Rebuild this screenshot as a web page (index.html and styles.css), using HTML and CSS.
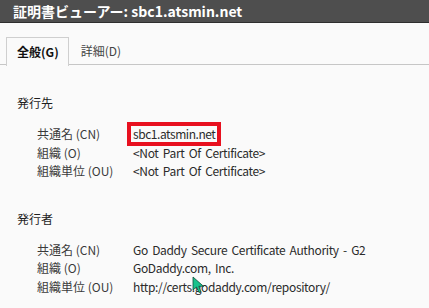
FILE: index.html
```html
<!DOCTYPE html>
<html lang="ja">
<head>
<meta charset="utf-8">
<link rel="stylesheet" href="styles.css">
</head>
<body>
<div class="titlebar">証明書ビューアー: sbc1.atsmin.net</div>
<div class="tabs">
  <div class="tab active">全般(G)</div>
  <div class="tab">詳細(D)</div>
</div>
<div class="content">
  <div class="section">
    <div class="heading">発行先</div>
    <div class="rows">
      <div class="label">共通名 (CN)</div><div class="value"><span class="hl">sbc1.atsmin.net</span></div>
      <div class="label">組織 (O)</div><div class="value">&lt;Not Part Of Certificate&gt;</div>
      <div class="label">組織単位 (OU)</div><div class="value">&lt;Not Part Of Certificate&gt;</div>
    </div>
  </div>
  <div class="section second">
    <div class="heading">発行者</div>
    <div class="rows">
      <div class="label">共通名 (CN)</div><div class="value">Go Daddy Secure Certificate Authority - G2</div>
      <div class="label">組織 (O)</div><div class="value">GoDaddy.com, Inc.</div>
      <div class="label">組織単位 (OU)</div><div class="value">http://certs.godaddy.com/repository/</div>
    </div>
  </div>
</div>
<svg class="cursor" width="14" height="18" viewBox="0 0 14 18"><path d="M1 1 L1 14 L4.5 11 L7 16.5 L9 15.5 L6.8 10.3 L11.5 10.3 Z" fill="#19c28c" stroke="#0d4d3a" stroke-width="0.8"/></svg>
</body>
</html>
```
FILE: styles.css
```css
html, body {
  margin: 0;
  padding: 0;
  background: #fafafa;
  font-family: "Noto Sans CJK JP", "Noto Sans", sans-serif;
  color: #2b2b2b;
  width: 429px;
  height: 308px;
  overflow: hidden;
  position: relative;
}
.titlebar {
  height: 22px;
  background: #4e4e4e;
  border-bottom: 1px solid #2e2e2e;
  color: #ffffff;
  font-weight: bold;
  font-size: 14px;
  line-height: 22px;
  padding-left: 13px;
}
.tabs {
  display: flex;
  margin-top: 14px;
  padding-left: 6px;
  border-bottom: 1px solid #c6c6c6;
  height: 27px;
  font-size: 12px;
}
.tab {
  height: 27px;
  line-height: 27px;
  padding: 0 11px 0 12px;
  color: #444;
}
.tab.active {
  border: 1px solid #cfcfcf;
  border-bottom: none;
  line-height: 27px;
  padding: 0 9px 0 10px;
  color: #111;
  background: #fafafa;
  font-weight: bold;
  margin-bottom: -1px;
  height: 28px;
}
.content {
  padding-left: 17px;
  font-size: 12px;
}
.section {
  padding-top: 29px;
}
.section.second {
  padding-top: 29px;
}
.heading {
  line-height: 18px;
  color: #1e1e1e;
  margin-bottom: 13px;
}
.rows {
  display: grid;
  grid-template-columns: 96px auto;
  padding-left: 20px;
  line-height: 18.5px;
}
.label {
  color: #3a3a3a;
}
.value {
  color: #2b2b2b;
  letter-spacing: -0.35px;
  word-spacing: 2px;
}
.hl {
  display: inline-block;
  outline: 4px solid #e8101f;
  padding: 0 2px;
  margin-left: -2px;
  line-height: 16px;
  letter-spacing: -0.45px;
}
.cursor {
  position: absolute;
  left: 192px;
  top: 276px;
}
```
